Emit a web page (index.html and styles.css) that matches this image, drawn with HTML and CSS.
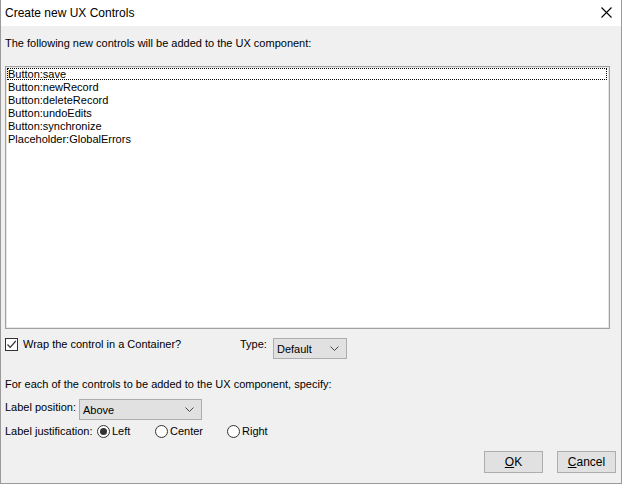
FILE: index.html
```html
<!DOCTYPE html>
<html>
<head>
<meta charset="utf-8">
<title>Create new UX Controls</title>
<link rel="stylesheet" href="styles.css">
</head>
<body>
<div class="window">
  <div class="titlebar">
    <span class="title">Create new UX Controls</span>
    <svg class="close" width="11" height="11" viewBox="0 0 11 11"><path d="M0.5 0.5L10.5 10.5M10.5 0.5L0.5 10.5" stroke="#000" stroke-width="1.1" fill="none"/></svg>
  </div>
  <div class="content">
    <div class="intro">The following new controls will be added to the UX component:</div>
    <div class="listbox">
      <div class="item focused">Button:save</div>
      <div class="item">Button:newRecord</div>
      <div class="item">Button:deleteRecord</div>
      <div class="item">Button:undoEdits</div>
      <div class="item">Button:synchronize</div>
      <div class="item">Placeholder:GlobalErrors</div>
    </div>
    <div class="row wrap-row">
      <span class="checkbox"><svg width="11" height="11" viewBox="0 0 11 11"><path d="M1.5 5.5L4.2 8.3L9.8 2" stroke="#333" stroke-width="1.2" fill="none"/></svg></span>
      <span class="wrap-label">Wrap the control in a Container?</span>
      <span class="type-label">Type:</span>
      <span class="select type-select"><span class="sel-text">Default</span><svg class="chev" width="9" height="5" viewBox="0 0 9 5"><path d="M0.5 0.5L4.5 4.5L8.5 0.5" stroke="#444" fill="none"/></svg></span>
    </div>
    <div class="foreach">For each of the controls to be added to the UX component, specify:</div>
    <div class="row pos-row">
      <span class="pos-label">Label position:</span>
      <span class="select pos-select"><span class="sel-text">Above</span><svg class="chev" width="9" height="5" viewBox="0 0 9 5"><path d="M0.5 0.5L4.5 4.5L8.5 0.5" stroke="#444" fill="none"/></svg></span>
    </div>
    <div class="row just-row">
      <span class="just-label">Label justification:</span>
      <span class="radio-opt r-left"><span class="radio checked"></span>Left</span>
      <span class="radio-opt r-center"><span class="radio"></span>Center</span>
      <span class="radio-opt r-right"><span class="radio"></span>Right</span>
    </div>
    <div class="buttons">
      <span class="btn"><u>O</u>K</span>
      <span class="btn"><u>C</u>ancel</span>
    </div>
  </div>
</div>
</body>
</html>
```

FILE: styles.css
```css
html, body {
  margin: 0;
  padding: 0;
  background: #ffffff;
}
body {
  font-family: "Liberation Sans", Arial, sans-serif;
  font-size: 11px;
  color: #000;
}
.window {
  box-sizing: border-box;
  width: 622px;
  height: 484px;
  border: 1px solid #9a9a9a;
  border-top: none;
  background: #f0f0f0;
  display: flex;
  flex-direction: column;
}
.titlebar {
  height: 26px;
  background: #ffffff;
  display: flex;
  align-items: center;
  justify-content: space-between;
  padding: 0 9px 0 4px;
  flex: none;
}
.title {
  font-size: 12px;
  color: #000;
}
.close {
  display: block;
  margin-top: -1px;
}
.content {
  padding: 0 4px;
  display: flex;
  flex-direction: column;
}
.intro {
  margin-top: 11px;
  line-height: 13px;
}
.listbox {
  margin-top: 16px;
  box-sizing: border-box;
  width: 605px;
  height: 263px;
  background: #fff;
  border: 1px solid #a0a0a0;
  box-shadow: inset 0 0 0 1px #e6e6e6;
  padding: 1px 2px 1px 1px;
}
.item {
  line-height: 13px;
  height: 13px;
  padding-left: 1px;
  white-space: nowrap;
}
.item.focused {
  outline: 1px dotted #000;
  outline-offset: -1px;
  height: 12px;
  line-height: 12px;
  margin-bottom: 1px;
}
.row {
  display: flex;
  align-items: center;
}
.wrap-row {
  margin-top: 9px;
  height: 21px;
  align-items: flex-start;
}
.checkbox {
  box-sizing: border-box;
  width: 13px;
  height: 13px;
  border: 1px solid #333;
  background: #fff;
  display: flex;
  align-items: center;
  justify-content: center;
  flex: none;
}
.wrap-label {
  margin-left: 5px;
  line-height: 13px;
  width: 217px;
}
.type-label {
  line-height: 13px;
  width: 33px;
}
.select {
  box-sizing: border-box;
  height: 21px;
  background: #e1e1e1;
  border: 1px solid #adadad;
  display: flex;
  align-items: center;
  justify-content: space-between;
  padding: 2px 7px 0 3px;
}
.type-select {
  width: 74px;
}
.pos-select {
  width: 123px;
}
.sel-text {
  line-height: 13px;
}
.chev {
  display: block;
  margin-top: -3px;
}
.foreach {
  margin-top: 19px;
  line-height: 13px;
}
.pos-row {
  margin-top: 8px;
  height: 21px;
}
.pos-label {
  width: 74px;
  line-height: 13px;
  margin-top: -5px;
}
.just-row {
  margin-top: 5px;
  height: 13px;
}
.just-label {
  width: 92px;
  line-height: 13px;
}
.radio-opt {
  display: flex;
  align-items: center;
  line-height: 13px;
}
.r-left { width: 58px; }
.r-center { width: 72px; }
.radio {
  box-sizing: border-box;
  width: 13px;
  height: 13px;
  border: 1px solid #333;
  border-radius: 50%;
  background: #fff;
  margin-right: 2px;
  display: flex;
  align-items: center;
  justify-content: center;
}
.radio.checked::after {
  content: "";
  width: 7px;
  height: 7px;
  border-radius: 50%;
  background: #333;
}
.buttons {
  margin-top: 13px;
  display: flex;
  justify-content: flex-end;
  gap: 14px;
  width: 611px;
}
.btn {
  box-sizing: border-box;
  width: 59px;
  height: 22px;
  background: #e1e1e1;
  border: 1px solid #adadad;
  display: flex;
  align-items: center;
  justify-content: center;
  font-size: 12px;
}
.btn u {
  text-decoration: underline;
}
```
